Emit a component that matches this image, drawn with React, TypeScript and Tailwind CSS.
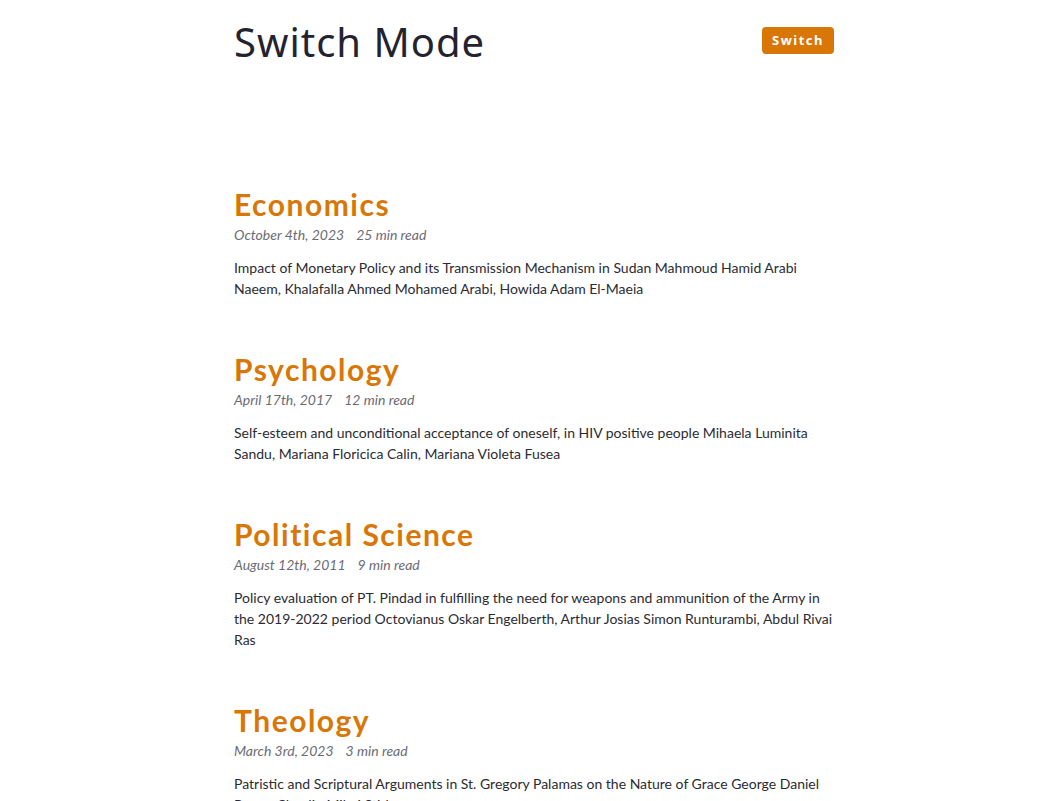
import React from 'react';

const posts = [
  {
    title: 'Economics',
    date: 'October 4th, 2023',
    read: '25 min read',
    text: 'Impact of Monetary Policy and its Transmission Mechanism in Sudan Mahmoud Hamid Arabi Naeem, Khalafalla Ahmed Mohamed Arabi, Howida Adam El-Maeia',
  },
  {
    title: 'Psychology',
    date: 'April 17th, 2017',
    read: '12 min read',
    text: 'Self-esteem and unconditional acceptance of oneself, in HIV positive people Mihaela Luminita Sandu, Mariana Floricica Calin, Mariana Violeta Fusea',
  },
  {
    title: 'Political Science',
    date: 'August 12th, 2011',
    read: '9 min read',
    text: 'Policy evaluation of PT. Pindad in fulfilling the need for weapons and ammunition of the Army in the 2019-2022 period Octovianus Oskar Engelberth, Arthur Josias Simon Runturambi, Abdul Rivai Ras',
  },
  {
    title: 'Theology',
    date: 'March 3rd, 2023',
    read: '3 min read',
    text: 'Patristic and Scriptural Arguments in St. Gregory Palamas on the Nature of Grace George Daniel Pascu, Claudiu Mihai Stirbu',
  },
];

export default function App() {
  return (
    <div className="min-h-[801px] bg-white font-['Lato','Noto_Sans',sans-serif] text-[#2b2b33]">
      <div className="flex justify-center pl-[10px]">
        <main className="w-[600px]">
          {/* Header */}
          <header className="flex items-start justify-between pt-[20px]">
            <h1 className="font-['Noto_Sans',sans-serif] text-[40px] leading-[44px] font-normal tracking-[1px] text-[#23232f]">
              Switch Mode
            </h1>
            <button className="mt-[7px] h-[27px] rounded-[4px] bg-[#d97706] px-[10px] font-['Noto_Sans',sans-serif] text-[13px] font-bold tracking-[1.5px] text-white">
              Switch
            </button>
          </header>

          {/* Posts */}
          <div className="mt-[122px]">
            {posts.map((post) => (
              <article key={post.title} className="mb-[52px]">
                <h3 className="text-[30px] leading-[36px] font-bold tracking-[1.5px] text-[#d97706]">
                  {post.title}
                </h3>
                <div className="mt-[2px] text-[14px] leading-[21px] italic text-[#6b6b75]">
                  <span>{post.date}</span>
                  <span className="ml-[12px]">{post.read}</span>
                </div>
                <p className="mt-[12px] text-[14px] leading-[21px] text-[#2b2b33]">
                  {post.text}
                </p>
              </article>
            ))}
          </div>
        </main>
      </div>
    </div>
  );
}
